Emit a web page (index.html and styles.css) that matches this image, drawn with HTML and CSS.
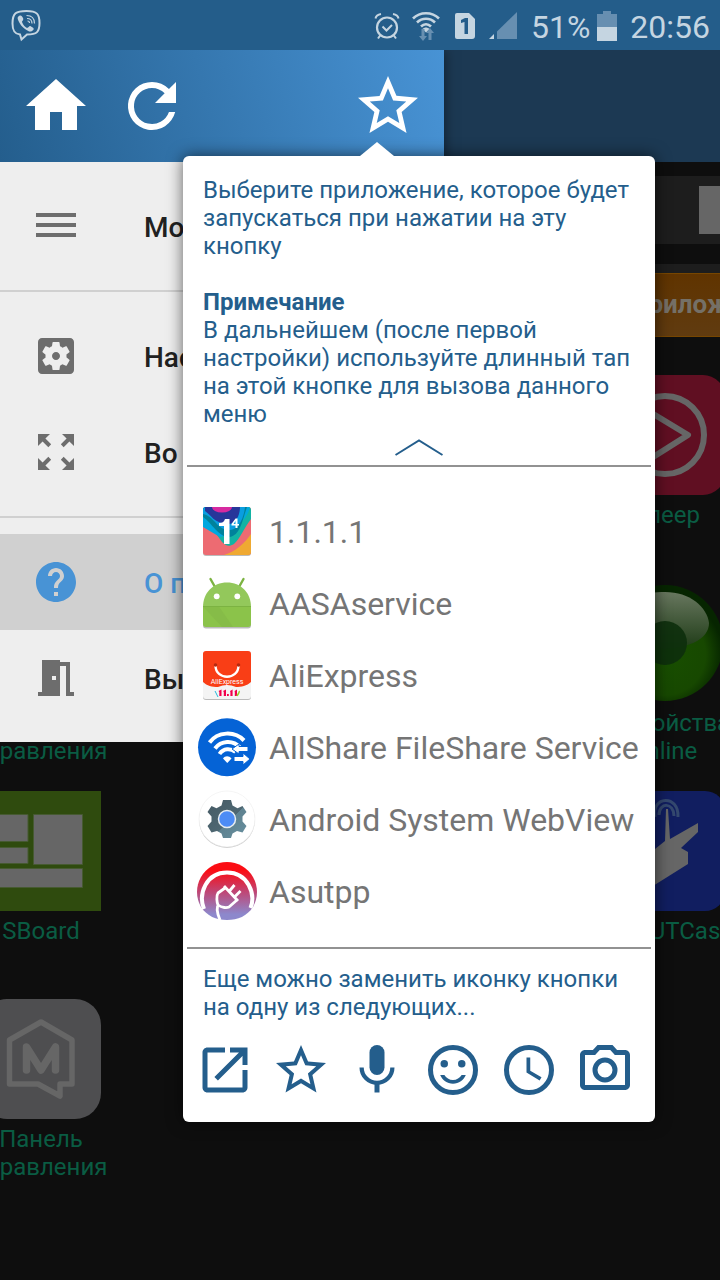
FILE: index.html
```html
<!DOCTYPE html>
<html lang="ru">
<head>
<meta charset="utf-8">
<meta name="viewport" content="width=device-width, initial-scale=1">
<title>Меню</title>
<link rel="stylesheet" href="styles.css">
</head>
<body>
<div class="screen">
  <header class="status">
    <svg class="status-viber" viewBox="0 0 32 34" width="32" height="34" fill="none" stroke="currentColor" aria-hidden="true">
      <path stroke-width="2" d="M10 26.500C4 26 2.500 22 2.500 15.500 2.500 5 6 3 16.500 3S29.500 6 29.500 15 27 26.500 17 26.500l-5.500 5z"/>
      <path fill="currentColor" stroke="none" d="M9 8c2-1 3 0 4 2s-1 3-1 4c1 3 3 5 5 6 2 0 2-3 4-1.500 4 2 3 3 1 4.500s-4 0-7-2-5-5-6.500-8S7.500 9 9 8z"/>
      <path stroke-width="1.200" d="M16.500 7.500c5 0 8 3 8 8M17 10.500c3 0 5 2 5 5M17.500 13c1.500 0 2 1 2 2"/>
    </svg>
    <div class="status-right">
      <svg viewBox="0 0 26 28" width="26" height="28" fill="none" stroke="currentColor" aria-hidden="true">
        <circle cx="13" cy="15.500" r="10" stroke-width="2.200"/>
        <path stroke-width="2" d="M1.500 6.500C2 4 4 2.500 7 2M24.500 6.500C24 4 22 2.500 19 2M8.500 14.500l4 4 5.500-5.500M6.500 23l-2.500 3.500M19.500 23l2.500 3.500"/>
      </svg>
      <svg class="status-wifi" viewBox="0 0 28 30" width="28" height="30" fill="none" stroke="currentColor" aria-hidden="true">
        <path stroke-width="2.600" d="M1 7.500C8 .5 20 .5 27 7.500M5 11.500c5-5 13-5 18 0M9 15.500c3-3 7-3 10 0"/>
        <path fill="currentColor" stroke="none" d="M10.500 18c2-2 5-2 7 0L14 21.500z"/>
        <path class="status-dim" stroke="none" d="M9.500 18h3v7H15l-4 5-4-5h2.500zM16.500 29v-7H14l4-5 4 5h-2.500v7z"/>
      </svg>
      <svg class="status-sim" viewBox="0 0 22 28" width="22" height="28" aria-hidden="true">
        <path fill="currentColor" d="M3 1h12l6 6v17a3 3 0 0 1-3 3H3a2 2 0 0 1-2-2V3a2 2 0 0 1 2-2z"/>
        <path class="status-cut" d="M7 8l4-2h3v16h-3.500V10L7 11z"/>
      </svg>
      <svg class="status-signal" viewBox="0 0 28 28" width="28" height="28" aria-hidden="true">
        <path class="status-dim" d="M28 0v27H8V19.500z"/>
        <path fill="currentColor" d="M5 22v5H0z"/>
      </svg>
      <span class="status-percent">51%</span>
      <svg class="status-battery" viewBox="0 0 20 30" width="20" height="30" aria-hidden="true">
        <path class="status-dim" d="M0 3h6V0h8v3h6v13H0z"/>
        <path fill="currentColor" d="M0 16h20v14H0z"/>
      </svg>
      <time class="status-time">20:56</time>
    </div>
  </header>

  <main class="stage">
    <section class="home">
      <div class="home-toolbar"></div>
      <div class="home-search"><div class="home-box"></div></div>
      <div class="home-strip"></div>
      <button class="home-tab" type="button">Приложения</button>
      <div class="home-grid">
        <div class="tile tile-last">
          <svg viewBox="0 0 120 120" class="tile-icon" aria-hidden="true">
            <rect width="120" height="120" rx="22" fill="#600f22"/>
            <g fill="none" stroke="#666" stroke-width="6" stroke-linejoin="round"><circle cx="60" cy="60" r="39"/><path d="M45 37l38 23-38 24z"/></g>
          </svg>
          <span>Плеер</span>
        </div>
        <div class="tile tile-first">
          <svg viewBox="0 0 120 120" class="tile-icon" aria-hidden="true"><rect width="120" height="120" rx="26" fill="#4e4e50"/></svg>
          <span>Панель управления</span>
        </div>
        <div class="tile tile-last">
          <svg viewBox="0 0 120 120" class="tile-icon" aria-hidden="true">
            <defs>
              <radialGradient id="orb" cx=".5" cy=".6" r=".5"><stop offset="0" stop-color="#184f00"/><stop offset=".7" stop-color="#174800"/><stop offset="1" stop-color="#062500"/></radialGradient>
              <linearGradient id="gloss" x2="0" y2="1"><stop offset="0" stop-color="#68775f"/><stop offset="1" stop-color="#1e3b16"/></linearGradient>
            </defs>
            <circle cx="60" cy="60" r="58" fill="url(#orb)"/>
            <path fill="url(#gloss)" d="M14 35C22 14 40 9 60 9c25 0 42 15 44 31 0 16-20 25-46 26z"/>
            <circle cx="60" cy="60" r="22" fill="#0d2f0c" opacity=".9"/>
          </svg>
          <span>Устройства online</span>
        </div>
        <div class="tile tile-first">
          <svg viewBox="0 0 120 120" class="tile-icon" aria-hidden="true">
            <rect width="120" height="120" fill="#2f4b0e"/>
            <path fill="#666" stroke="#465a31" d="M15 23.500h32v27H15zM52.500 23.500h49v50h-49zM15 56.500h32v16H15zM15 77.500h86.500v19H15z"/>
          </svg>
          <span>SBoard</span>
        </div>
        <div class="tile tile-last">
          <svg viewBox="0 0 120 120" class="tile-icon" aria-hidden="true">
            <rect width="120" height="120" rx="20" fill="#111e60"/>
            <path fill="#666" d="M15 75l35-17 10-8 1-32h2l2 30 28-16v9L76 57l7 4v12L40 100z"/>
            <path fill="none" stroke="#34486e" stroke-width="3" d="M50 26c-4-21 24-23 23 0M54 24c0-13 15-13 15 1"/>
          </svg>
          <span>SHOUTCast</span>
        </div>
        <div class="tile tile-first">
          <svg viewBox="0 0 120 120" class="tile-icon" aria-hidden="true">
            <rect width="120" height="120" rx="26" fill="#4e4e50"/>
            <g fill="none" stroke="#666" stroke-linejoin="round"><path stroke-width="5.500" d="M60 23L28.500 41v44H57l22 12V85h12V41z"/><path stroke-width="7.500" stroke-linecap="round" d="M45.500 71V48L60 71l14.500-23v23"/></g>
          </svg>
          <span>Панель управления</span>
        </div>
      </div>
    </section>

    <nav class="drawer">
      <div class="drawer-bar">
        <button type="button" class="bar-button" aria-label="Домой"><svg viewBox="0 0 24 24"><path d="M10 20v-6h4v6h5v-8h3L12 3 2 12h3v8z"/></svg></button>
        <button type="button" class="bar-button" aria-label="Обновить"><svg viewBox="0 0 24 24"><path d="M17.650 6.350A7.960 7.960 0 0 0 12 4a8 8 0 1 0 7.730 10h-2.080A6 6 0 1 1 12 6c1.660 0 3.140.69 4.220 1.780L13 11h7V4z"/></svg></button>
        <button type="button" class="bar-button bar-star" aria-label="Избранное"><svg viewBox="0 0 24 24"><path d="M22 9.240l-7.190-.62L12 2 9.190 8.630 2 9.240l5.460 4.730L5.820 21 12 17.270 18.180 21l-1.630-7.030zM12 15.400l-3.760 2.270 1-4.280-3.320-2.880 4.380-.38L12 6.100l1.710 4.040 4.380.38-3.320 2.880 1 4.280z"/></svg></button>
      </div>
      <div class="drawer-group">
        <a class="drawer-item" href="#more"><svg viewBox="0 0 24 24"><path d="M2 5.500h20v2H2zM2 10.500h20v2H2zM2 15.500h20v2H2z"/></svg><span>Мой дом</span></a>
      </div>
      <div class="drawer-group">
        <a class="drawer-item" href="#settings"><svg viewBox="0 0 24 24"><path d="M12 10c-1.100 0-2 .9-2 2s.9 2 2 2 2-.9 2-2-.9-2-2-2zm7-7H5c-1.110 0-2 .9-2 2v14c0 1.100.89 2 2 2h14c1.110 0 2-.9 2-2V5c0-1.100-.89-2-2-2zm-1.750 9c0 .23-.02.46-.05.68l1.480 1.160c.13.11.17.3.08.45l-1.400 2.420c-.09.15-.27.21-.43.15l-1.740-.7c-.36.28-.76.51-1.180.69l-.26 1.850c-.03.17-.18.3-.35.3h-2.800c-.17 0-.32-.13-.35-.29l-.26-1.850c-.43-.18-.82-.41-1.180-.69l-1.740.7c-.16.06-.34 0-.43-.15l-1.400-2.420c-.09-.15-.05-.34.08-.45l1.480-1.160c-.03-.23-.05-.46-.05-.69 0-.23.02-.46.05-.68l-1.480-1.160c-.13-.11-.17-.3-.08-.45l1.400-2.420c.09-.15.27-.21.43-.15l1.740.7c.36-.28.76-.51 1.180-.69l.26-1.850c.03-.17.18-.3.35-.3h2.800c.17 0 .32.13.35.29l.26 1.850c.43.18.82.41 1.180.69l1.740-.7c.16-.06.34 0 .43.15l1.400 2.420c.09.15.05.34-.08.45l-1.480 1.160c.03.23.05.46.05.69z"/></svg><span>Настройки</span></a>
        <a class="drawer-item" href="#fullscreen"><svg viewBox="0 0 24 24"><path d="M15 3l2.300 2.300-2.890 2.870 1.420 1.420L18.700 6.700 21 9V3zM3 9l2.300-2.300 2.870 2.890 1.420-1.420L6.700 5.300 9 3H3zm6 12l-2.300-2.300 2.890-2.870-1.420-1.420L5.300 17.300 3 15v6zm12-6l-2.300 2.300-2.870-2.890-1.420 1.420 2.890 2.870L15 21h6z"/></svg><span>Во весь экран</span></a>
      </div>
      <div class="drawer-group">
        <a class="drawer-item drawer-active" href="#about"><svg viewBox="0 0 24 24"><path d="M12 2C6.480 2 2 6.480 2 12s4.480 10 10 10 10-4.480 10-10S17.520 2 12 2zm1 17h-2v-2h2v2zm2.070-7.750l-.9.92C13.450 12.900 13 13.500 13 15h-2v-.5c0-1.100.45-2.100 1.170-2.830l1.240-1.260c.37-.36.59-.86.59-1.410 0-1.100-.9-2-2-2s-2 .9-2 2H8c0-2.210 1.790-4 4-4s4 1.790 4 4c0 .88-.36 1.680-.93 2.250z"/></svg><span>О программе</span></a>
        <a class="drawer-item" href="#exit"><svg viewBox="0 0 24 24"><path fill-rule="evenodd" d="M5 3h9v1h5v15h2v2h-4V6h-3v15H3v-2h2zM10 11v2h2v-2z"/></svg><span>Выход</span></a>
      </div>
    </nav>

    <section class="popup" role="dialog" aria-label="Выбор приложения">
      <div class="popup-text">
        <p>Выберите приложение, которое будет запускаться при нажатии на эту кнопку</p>
        <h2>Примечание</h2>
        <p>В дальнейшем (после первой настройки) используйте длинный тап на этой кнопке для вызова данного меню</p>
      </div>
      <button class="popup-fold" type="button" aria-label="Свернуть"><svg viewBox="0 0 48 18" width="48" height="18"><path fill="none" stroke="currentColor" stroke-width="2" d="M.5 17L24 2.500 47.500 17"/></svg></button>
      <div class="popup-apps">
        <button class="app" type="button">
          <svg viewBox="0 0 60 60" aria-hidden="true">
            <clipPath id="sq"><rect x="6" y="6" width="48" height="48" rx="3"/></clipPath>
            <rect x="6" y="7" width="48" height="48" rx="3" fill="#bbb"/>
            <g clip-path="url(#sq)">
              <path fill="#ed6b72" d="M6 6h48v48H6z"/>
              <path fill="#efa932" d="M54 33C48 42 38 51 27 54h27z"/>
              <path fill="#12b3a4" d="M14 6h40v12c-7 9-11 20-17 25-5 3-8 2-12-2L10 20z"/>
              <path fill="#00a8df" d="M6 6h47c-2 9-7 13-12 19-6 7-12 10-18 11L6 26z"/>
              <path fill="#00829b" d="M6 16c9 6 16 21 27 20 10-2 12-15 17-30H6z"/>
              <path fill="#0a9ee0" d="M6 6h42c-1 9-5 22-15 23-12 1-16-14-27-16z"/>
              <path fill="#27369a" d="M8 6h35c0 9-5 18-13 17C17 22 14 14 8 10z"/>
              <ellipse cx="25" cy="6" rx="10" ry="5.500" fill="#d62aa0"/>
            </g>
            <path fill="#fff" d="M22 22c3 0 5-1 6-4h4.500v25H27V25h-5z"/>
            <path fill="#fff" fill-rule="evenodd" d="M38.500 17.500h2V23H42v1.500h-1.500V27h-2v-2.500h-4V23zM38.500 20L36.500 23h2z"/>
          </svg>
          <span>1.1.1.1</span>
        </button>
        <button class="app" type="button">
          <svg viewBox="0 0 60 60" aria-hidden="true">
            <path fill="#bbb" d="M6 34h48v18.500a3 3 0 0 1-3 3H9a3 3 0 0 1-3-3z"/>
            <path stroke="#7cb342" stroke-width="2.400" stroke-linecap="round" d="M13.500 6l4.500 8M46.500 6L42 14"/>
            <path fill="#93c85b" d="M6 34C6 20 16 9.500 30 9.500S54 20 54 34z"/>
            <path fill="#8bc34a" d="M6 33.500h48V51a3 3 0 0 1-3 3H9a3 3 0 0 1-3-3z"/>
            <path fill="#7daf45" d="M6 33.500h16L36 54H25z" opacity=".35"/>
            <path fill="#7cb342" d="M6 33h48v1H6z"/>
            <circle cx="19.700" cy="23.300" r="2.900" fill="#fff"/><circle cx="40.300" cy="23.300" r="2.900" fill="#fff"/>
          </svg>
          <span>AASAservice</span>
        </button>
        <button class="app" type="button">
          <svg viewBox="0 0 60 60" aria-hidden="true">
            <rect x="6" y="7" width="48" height="48" rx="3" fill="#bbb"/>
            <rect x="6" y="6" width="48" height="48" rx="3" fill="#f4f4f4"/>
            <path fill="#f93e16" d="M9 6h42a3 3 0 0 1 3 3v28c-4 4-10 5-15 5q-9-4-18 0c-6 0-11-1-15-5V9a3 3 0 0 1 3-3z"/>
            <path fill="none" stroke="#fff" stroke-width="2.400" stroke-linecap="round" d="M18.500 20.500c0 15 23 15 23 0"/>
            <circle cx="18.500" cy="20" r="1.800" fill="#b52a10"/><circle cx="41.500" cy="20" r="1.800" fill="#b52a10"/>
            <text class="ali-name" x="30" y="39" text-anchor="middle">AliExpress</text>
            <path fill="#f3004b" d="M21.500 46l3-1.500V51h-2.200v-4zM26 46l3-1.500V51h-2.200v-4zM30 49h1.800v2H30zM33 46l2.600-1.500V51h-2.200v-4zM37.500 46l2.500-1.500V51h-2.200v-4z"/>
            <path stroke="#25b8dc" d="M18 46l3 6"/><path fill="none" stroke="#92cf29" stroke-width="1.500" d="M42 46c1 1-1 3-2 5"/>
          </svg>
          <span>AliExpress</span>
        </button>
        <button class="app" type="button">
          <svg viewBox="0 0 60 60" aria-hidden="true">
            <circle cx="30" cy="30.300" r="29" fill="#0563d6"/>
            <g fill="none" stroke="#fff" stroke-width="4"><path d="M12.500 25.500c8-11 25-12 34.500-2"/><path d="M18 31.500c6-8 18-9 25-1"/><path d="M22.500 37c4-6 11-6 16-2"/></g>
            <path fill="#fff" d="M26 41.500c2-3 6-3 8.500 0L30.300 46z"/>
            <path fill="#fff" stroke="#0563d6" d="M35 32l7-5v2.500h9v5h-9V37zM37 39.500h9V36l7 6-7 6v-3.500h-9z"/>
          </svg>
          <span>AllShare FileShare Service</span>
        </button>
        <button class="app" type="button">
          <svg viewBox="0 0 60 60" aria-hidden="true">
            <defs><linearGradient id="gear" x2="1" y2="1"><stop offset="0" stop-color="#455a64"/><stop offset=".55" stop-color="#4e6772"/><stop offset=".56" stop-color="#5f8290"/><stop offset="1" stop-color="#67909f"/></linearGradient></defs>
            <circle cx="30" cy="31" r="28" fill="#c8c8c8"/><circle cx="30" cy="30" r="28" fill="#fff" stroke="#eee" stroke-width=".6"/>
            <path fill="url(#gear)" d="M26 11h8l1.500 5.500 5 2.700 5-2.200 4 6-4 4.500v5l4 4.500-4 6.500-5.500-1.500-4.500 2.500L34 49h-8l-1.500-4.500L20 42l-5.500 1.500-4-6.500 4-4.500v-5l-4-4.500 4-6 5 2.200 5-2.700z"/>
            <circle cx="30" cy="30" r="8.500" fill="#4d8cf5" stroke="#e8edf0" stroke-width="1.500"/>
          </svg>
          <span>Android System WebView</span>
        </button>
        <button class="app" type="button">
          <svg viewBox="0 0 60 60" aria-hidden="true">
            <defs><linearGradient id="plug" x2="0" y2="1"><stop offset=".15" stop-color="#fb0d14"/><stop offset=".5" stop-color="#c14472"/><stop offset=".9" stop-color="#8d88cc"/></linearGradient></defs>
            <path fill="url(#plug)" d="M4 46A30 30 0 1 1 56 46C50 55 41 59 30 59S10 55 4 46z"/>
            <path fill="none" stroke="#fff" stroke-width="4" d="M7 48C1 33 9 11.500 30 11.500S59 33 53.500 47"/>
            <path fill="none" stroke="#fff" stroke-width="2.800" stroke-linejoin="round" d="M28 27l-7 5c-2 3-1 10 0 12 4 3 9 3 11 2l8-7M27 25l14 15M32.500 30l5-6M37.500 36l6-6M22 43c-3 3-2 9 1 16"/>
          </svg>
          <span>Asutpp</span>
        </button>
      </div>
      <p class="popup-hint">Еще можно заменить иконку кнопки на одну из следующих...</p>
      <div class="popup-icons">
        <button type="button" aria-label="Открыть"><svg viewBox="0 0 24 24"><path d="M19 19H5V5h7V3H5c-1.110 0-2 .9-2 2v14c0 1.100.89 2 2 2h14c1.100 0 2-.9 2-2v-7h-2v7zM14 3v2h3.590l-9.830 9.830 1.410 1.410L19 6.410V10h2V3z"/></svg></button>
        <button type="button" aria-label="Звезда"><svg viewBox="0 0 24 24"><path d="M22 9.240l-7.190-.62L12 2 9.190 8.630 2 9.240l5.460 4.730L5.820 21 12 17.270 18.180 21l-1.630-7.030zM12 15.400l-3.760 2.270 1-4.280-3.320-2.880 4.380-.38L12 6.100l1.710 4.040 4.380.38-3.320 2.880 1 4.280z"/></svg></button>
        <button type="button" aria-label="Микрофон"><svg viewBox="0 0 24 24"><rect x="9" y="2" width="6" height="12" rx="3"/><path d="M11 16.500h2V21h-2z"/><path fill="none" stroke="currentColor" stroke-width="1.700" d="M5.850 11a6.150 6.150 0 0 0 12.300 0"/></svg></button>
        <button type="button" aria-label="Смайл"><svg viewBox="0 0 24 24"><circle cx="12" cy="12" r="9" fill="none" stroke="currentColor" stroke-width="2"/><circle cx="8.500" cy="9.500" r="1.500"/><circle cx="15.500" cy="9.500" r="1.500"/><path d="M12 16c-1.480 0-2.750-.81-3.450-2H6.880c.8 2.050 2.790 3.500 5.120 3.500s4.320-1.450 5.120-3.500h-1.670c-.7 1.190-1.970 2-3.450 2z"/></svg></button>
        <button type="button" aria-label="Часы"><svg viewBox="0 0 24 24"><circle cx="12" cy="12" r="9" fill="none" stroke="currentColor" stroke-width="2"/><path d="M12.500 7H11v6l5.250 3.150.75-1.230-4.500-2.670z"/></svg></button>
        <button type="button" aria-label="Камера"><svg viewBox="0 0 24 24"><path fill-rule="evenodd" d="M4 4h3.170L9 2h6l1.830 2H20c1.100 0 2 .9 2 2v12c0 1.100-.9 2-2 2H4c-1.100 0-2-.9-2-2V6c0-1.100.9-2 2-2zM4 6v12h16V6h-4.050l-1.830-2H9.880L8.050 6z"/><circle cx="12" cy="12" r="4" fill="none" stroke="currentColor" stroke-width="2"/></svg></button>
      </div>
    </section>
  </main>
</div>
</body>
</html>
```
FILE: styles.css
```css
* {
  box-sizing: border-box;
}

body {
  margin: 0;
  background: #0e0e0e;
  font-family: Roboto, "Noto Sans", sans-serif;
}

button {
  margin: 0;
  padding: 0;
  border: 0;
  background: none;
  color: inherit;
  font: inherit;
  cursor: pointer;
}

svg {
  flex: none;
}

.screen {
  display: flex;
  flex-direction: column;
  min-height: 100vh;
  overflow: hidden;
}

/* Status bar */
.status {
  display: flex;
  align-items: center;
  justify-content: space-between;
  height: 50px;
  padding: 0 10px;
  background: #245d8a;
  color: #c5d5e1;
}

.status-right {
  display: flex;
  align-items: center;
  padding-top: 2px;
  font-size: 32px;
  line-height: 40px;
}

.status-wifi {
  margin-left: 12px;
}

.status-sim {
  margin-left: 14px;
}

.status-signal {
  margin-left: 13px;
}

.status-percent {
  margin: 2px 0 0 14px;
}

.status-battery {
  margin-left: 7px;
}

.status-time {
  margin: 2px 0 0 13px;
}

.status-dim {
  fill: #678fb1;
}

.status-cut {
  fill: #245d8a;
}

.stage {
  position: relative;
  flex: 1;
}

/* Dimmed home screen */
.home {
  display: flex;
  flex-direction: column;
  color: #0a5c43;
}

.home-toolbar {
  height: 112px;
  background: #1c3953;
}

.home-search {
  display: flex;
  align-items: center;
  justify-content: flex-end;
  height: 68px;
  margin-top: 14px;
  background: #1d1d1d;
}

.home-box {
  width: 21px;
  height: 48px;
  background: #666;
}

.home-strip {
  height: 9px;
  margin-top: 20px;
  background: #1d1d1d;
}

.home-tab {
  align-self: flex-end;
  width: 90px;
  height: 64px;
  padding-bottom: 2px;
  border: solid #774600;
  border-width: 1px 0;
  background: linear-gradient(#603400, #603b10);
  color: #757067;
  font-size: 26px;
  font-weight: 700;
  text-align: left;
}

.home-grid {
  display: grid;
  grid-template-columns: repeat(4, 1fr);
  grid-auto-rows: 208px;
  margin: 38px -49px 0 -63px;
}

.tile {
  display: flex;
  flex-direction: column;
  align-items: center;
  gap: 6px;
  font-size: 24px;
  line-height: 28px;
  text-align: center;
}

.tile span {
  width: 144px;
}

.tile-first {
  grid-column: 1;
}

.tile-last {
  grid-column: 4;
}

.tile-icon {
  width: 120px;
  height: 120px;
}

/* Side drawer */
.drawer {
  position: absolute;
  top: 0;
  left: 0;
  width: 444px;
  background: #eee;
  box-shadow: 0 0 12px rgba(0, 0, 0, .5);
  clip-path: inset(0 -20px 0 0);
}

.drawer-bar {
  display: flex;
  align-items: center;
  height: 112px;
  padding: 0 8px;
  background: linear-gradient(75deg, #245e8d, #4893d5);
  color: #fff;
}

.bar-button {
  display: flex;
  justify-content: center;
  width: 96px;
}

.bar-button svg {
  width: 72px;
  height: 72px;
  fill: currentColor;
}

.bar-star {
  margin-left: auto;
}

.drawer-group {
  padding: 16px 0;
}

.drawer-group + .drawer-group {
  border-top: 2px solid #d0d0d0;
}

.drawer-item {
  display: flex;
  align-items: center;
  gap: 64px;
  height: 96px;
  padding-left: 32px;
  color: #212121;
  font-size: 28px;
  font-weight: 500;
  line-height: 32px;
  text-decoration: none;
}

.drawer-item svg {
  width: 48px;
  height: 48px;
  fill: #6d6d6d;
}

.drawer-item span {
  padding-top: 3px;
}

.drawer-active {
  background: #d0d0d0;
  color: #4893d5;
}

.drawer-active svg {
  fill: #4893d5;
}

/* Popup */
.popup {
  position: absolute;
  top: 106px;
  right: 65px;
  width: 472px;
  padding: 20px 4px 22px;
  border-radius: 6px;
  background: #fff;
  color: #245e8c;
  font-size: 24px;
  line-height: 28px;
  box-shadow: 0 0 16px rgba(0, 0, 0, .6);
}

.popup::before {
  content: "";
  position: absolute;
  top: -14px;
  left: 177px;
  border: solid transparent;
  border-width: 0 17px 14px;
  border-bottom-color: #fff;
}

.popup p,
.popup h2 {
  margin: 0;
  font-size: 24px;
}

.popup-text {
  padding: 0 12px 0 16px;
}

.popup h2 {
  margin-top: 28px;
  font-weight: 700;
}

.popup-fold {
  display: flex;
  justify-content: center;
  width: 100%;
  padding: 10px 0 9px;
}

.popup-apps {
  padding: 28px 0 20px 10px;
  border: solid #929292;
  border-width: 2px 0;
}

.app {
  display: flex;
  align-items: center;
  gap: 12px;
  width: 100%;
  height: 72px;
  color: #757575;
  font-size: 32px;
  line-height: 40px;
  text-align: left;
  white-space: nowrap;
}

.app svg {
  width: 60px;
  height: 60px;
}

.app span {
  padding-top: 2px;
}

.ali-name {
  fill: #fff;
  font-size: 7px;
}

.popup .popup-hint {
  padding: 16px 12px 0 16px;
}

.popup-icons {
  display: flex;
  gap: 16px;
  padding: 19px 8px 0;
}

.popup-icons button {
  display: flex;
}

.popup-icons svg {
  width: 60px;
  height: 60px;
  fill: currentColor;
}
```
